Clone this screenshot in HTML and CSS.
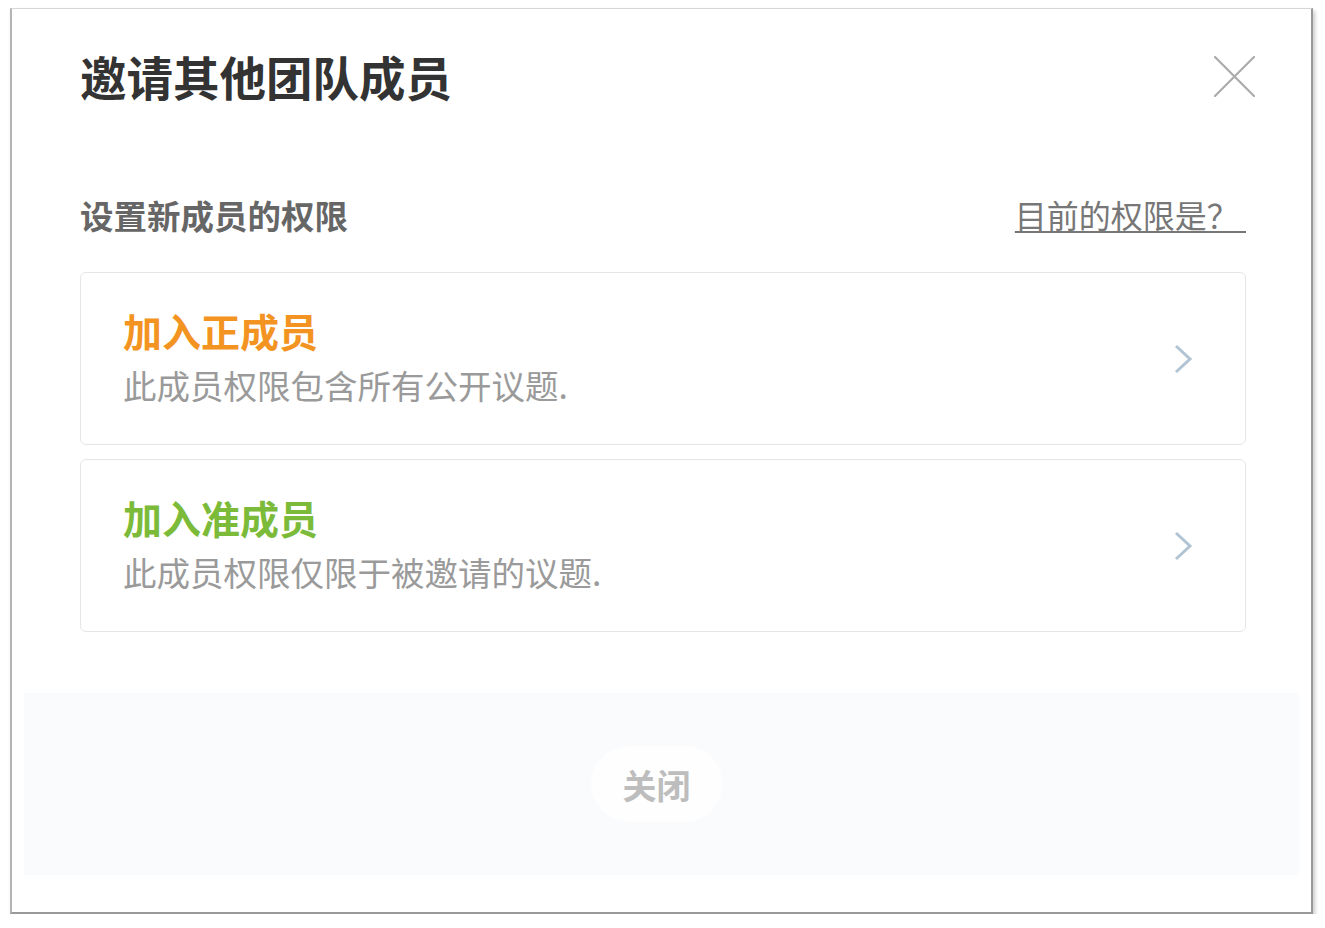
FILE: index.html
```html
<!DOCTYPE html>
<html lang="zh-CN">
<head>
<meta charset="utf-8" />
<title>邀请其他团队成员</title>
<link rel="stylesheet" href="styles.css">
</head>
<body>
<section class="dialog">
  <header class="dlg-head">
    <h1 class="dlg-title">邀请其他团队成员</h1>
    <a class="dlg-close" href="#" title="关闭">
      <svg width="41" height="41" viewBox="0 0 41 41"><path d="M1 1 L40 40 M40 1 L1 40" stroke="#ababab" stroke-width="2.2" fill="none" stroke-linecap="round"/></svg>
    </a>
  </header>

  <div class="dlg-body">
    <div class="perm-row">
      <span class="perm-label">设置新成员的权限</span>
      <a class="perm-help" href="#">目前的权限是？&nbsp;</a>
    </div>

    <a class="role-card" href="#">
      <div class="role-text">
        <div class="role-name orange">加入正成员</div>
        <div class="role-desc">此成员权限包含所有公开议题.</div>
      </div>
      <svg class="chev" width="20" height="30" viewBox="0 0 20 30"><path d="M3 2 L17 15 L3 28" stroke="#b1c4d4" stroke-width="3" fill="none"/></svg>
    </a>

    <a class="role-card" href="#">
      <div class="role-text">
        <div class="role-name green">加入准成员</div>
        <div class="role-desc">此成员权限仅限于被邀请的议题.</div>
      </div>
      <svg class="chev" width="20" height="30" viewBox="0 0 20 30"><path d="M3 2 L17 15 L3 28" stroke="#b1c4d4" stroke-width="3" fill="none"/></svg>
    </a>
  </div>

  <footer class="dlg-foot">
    <button class="btn-close" type="button">关闭</button>
  </footer>
</section>
</body>
</html>
```

FILE: styles.css
```css
body {
  margin: 0;
  background: #fff;
  font-family: "Noto Sans CJK SC", "Noto Sans", sans-serif;
}
a { text-decoration: none; }

.dialog {
  width: 1299px;
  height: 903px;
  margin: 8px 0 0 10px;
  background: #fff;
  border-top: 1px solid #d6d6d6;
  border-left: 2px solid #b4b4b4;
  border-right: 2px solid #999;
  border-bottom: 2px solid #999;
  box-shadow: 2px 3px 4px rgba(0,0,0,0.22);
  display: flex;
  flex-direction: column;
}

.dlg-head {
  display: flex;
  align-items: center;
  justify-content: space-between;
  padding: 44px 56px 0 68px;
}
.dlg-title {
  margin: 0;
  font-size: 46.5px;
  line-height: 46px;
  font-weight: 700;
  color: #333;
}
.dlg-close {
  display: block;
  width: 41px;
  height: 41px;
}
.dlg-close svg { display: block; }

.dlg-body {
  padding: 0 65px 0 68px;
}
.perm-row {
  display: flex;
  justify-content: space-between;
  align-items: center;
  margin-top: 99px;
  height: 33px;
}
.perm-label {
  font-size: 33.5px;
  line-height: 33px;
  font-weight: 700;
  color: #666;
}
.perm-help {
  font-size: 32px;
  line-height: 33px;
  color: #777;
  text-decoration: underline;
  text-underline-offset: 3px;
  text-decoration-thickness: 2px;
}

.role-card {
  display: flex;
  align-items: center;
  justify-content: space-between;
  height: 171px;
  box-sizing: content-box;
  margin-top: 41px;
  padding: 0 52px 0 42px;
  border: 1px solid #e6e6e6;
  border-radius: 6px;
}
.role-card + .role-card { margin-top: 14px; }
.role-text { padding-bottom: 5px; }
.role-name {
  font-size: 39px;
  line-height: 38px;
  font-weight: 700;
}
.role-name.orange { color: #f39322; }
.role-name.green { color: #7cbb3a; }
.role-desc {
  margin-top: 19px;
  font-size: 33.5px;
  line-height: 33px;
  color: #9a9a9a;
}
.chev { display: block; }

.dlg-foot {
  margin: 61px 12px 0 12px;
  height: 182px;
  background: #fafbfd;
  display: flex;
  align-items: center;
  justify-content: center;
}
.btn-close {
  width: 132px;
  height: 76px;
  border: none;
  border-radius: 38px;
  background: #fefefe;
  font-family: inherit;
  font-size: 34px;
  font-weight: 700;
  color: #bdbdbd;
  margin-left: -10px;
}
```
